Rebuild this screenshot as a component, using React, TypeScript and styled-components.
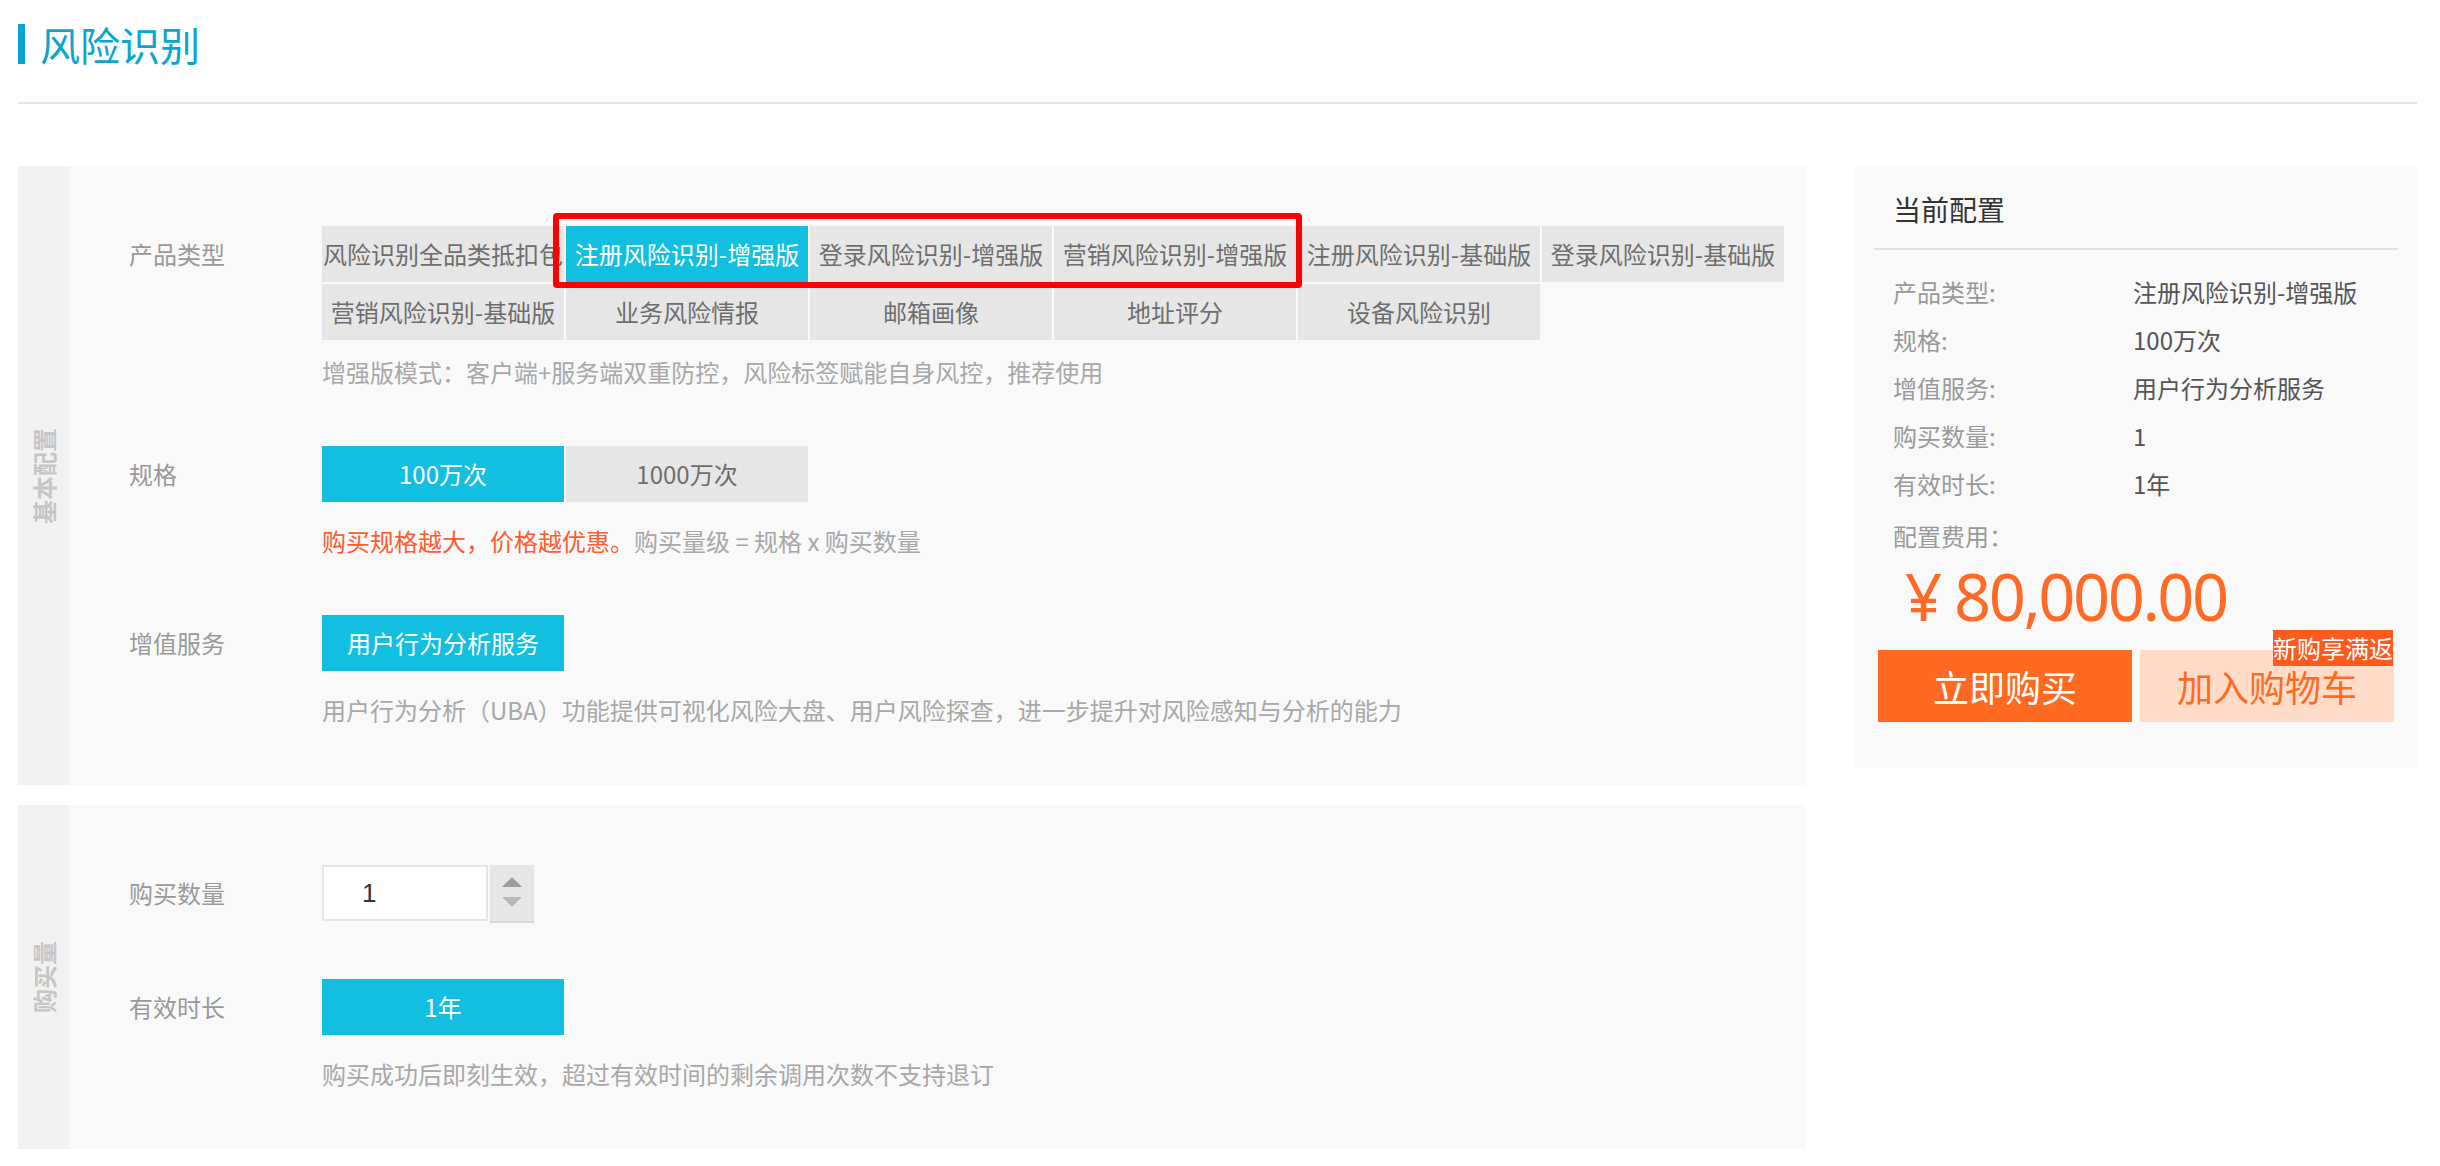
import styled, { createGlobalStyle } from "styled-components";

const cjk = `"Noto Sans CJK SC", "Noto Sans", sans-serif`;

const colors = {
  brand: "#08a6cf",
  cyan: "#13bfe1",
  cell: "#e6e6e6",
  panel: "#f9f9f9",
  strip: "#f2f2f2",
  label: "#999999",
  hint: "#a8a8a8",
  orange: "#ff6a26",
  warn: "#ff5b2e",
};

const GlobalStyle = createGlobalStyle`
  * { box-sizing: border-box; }
  body {
    margin: 0;
    background: #fff;
    font-family: ${cjk};
    color: #333;
  }
`;

const products = [
  "风险识别全品类抵扣包",
  "注册风险识别-增强版",
  "登录风险识别-增强版",
  "营销风险识别-增强版",
  "注册风险识别-基础版",
  "登录风险识别-基础版",
  "营销风险识别-基础版",
  "业务风险情报",
  "邮箱画像",
  "地址评分",
  "设备风险识别",
];

const summary = [
  ["产品类型:", "注册风险识别-增强版"],
  ["规格:", "100万次"],
  ["增值服务:", "用户行为分析服务"],
  ["购买数量:", "1"],
  ["有效时长:", "1年"],
];

export default function App() {
  return (
    <Page>
      <GlobalStyle />
      <Header>
        <TitleBar />
        <TitleText>风险识别</TitleText>
      </Header>

      <Main>
        <LeftCol>
          <Section>
            <SideStrip>
              <SideText>基本配置</SideText>
            </SideStrip>
            <SectionBody>
              <Row>
                <Label>产品类型</Label>
                <Field>
                  <OptionGrid>
                    {products.map((p, i) => (
                      <Option key={p} $active={i === 1}>
                        {p}
                      </Option>
                    ))}
                    <Highlight aria-hidden="true" />
                  </OptionGrid>
                  <Hint $tight>
                    增强版模式：客户端+服务端双重防控，风险标签赋能自身风控，推荐使用
                  </Hint>
                </Field>
              </Row>

              <Row>
                <Label>规格</Label>
                <Field>
                  <ChoiceRow>
                    <Option $active>100万次</Option>
                    <Option>1000万次</Option>
                  </ChoiceRow>
                  <Hint>
                    <Warn>购买规格越大，价格越优惠。</Warn>购买量级 = 规格 x 购买数量
                  </Hint>
                </Field>
              </Row>

              <Row>
                <Label>增值服务</Label>
                <Field>
                  <ChoiceRow>
                    <Option $active>用户行为分析服务</Option>
                  </ChoiceRow>
                  <Hint>
                    用户行为分析（UBA）功能提供可视化风险大盘、用户风险探查，进一步提升对风险感知与分析的能力
                  </Hint>
                </Field>
              </Row>
            </SectionBody>
          </Section>

          <Section>
            <SideStrip>
              <SideText>购买量</SideText>
            </SideStrip>
            <SectionBody>
              <Row>
                <Label>购买数量</Label>
                <Stepper>
                  <QtyInput defaultValue="1" />
                  <Spinner>
                    <svg width="20" height="10" viewBox="0 0 20 10">
                      <polygon points="10,0 20,10 0,10" fill="#9e9e9e" />
                    </svg>
                    <svg width="20" height="10" viewBox="0 0 20 10">
                      <polygon points="0,0 20,0 10,10" fill="#b8b8b8" />
                    </svg>
                  </Spinner>
                </Stepper>
              </Row>

              <Row>
                <Label>有效时长</Label>
                <Field>
                  <ChoiceRow>
                    <Option $active>1年</Option>
                  </ChoiceRow>
                  <Hint>购买成功后即刻生效，超过有效时间的剩余调用次数不支持退订</Hint>
                </Field>
              </Row>
            </SectionBody>
          </Section>
        </LeftCol>

        <Summary>
          <SummaryTitle>当前配置</SummaryTitle>
          <SummaryDivider />
          <InfoGrid>
            {summary.map(([k, v]) => (
              <InfoPair key={k}>
                <InfoKey>{k}</InfoKey>
                <InfoValue>{v}</InfoValue>
              </InfoPair>
            ))}
          </InfoGrid>
          <FeeLabel>配置费用：</FeeLabel>
          <Price>¥ 80,000.00</Price>
          <Actions>
            <ActionButton $variant="solid">立即购买</ActionButton>
            <ActionButton $variant="soft">
              加入购物车
              <Badge>新购享满返</Badge>
            </ActionButton>
          </Actions>
        </Summary>
      </Main>
    </Page>
  );
}

const Page = styled.div`
  padding: 0 23px 40px 18px;
`;

const Header = styled.header`
  display: flex;
  align-items: center;
  padding: 24px 0 38px;
  border-bottom: 2px solid #e6e6e6;
`;

const TitleBar = styled.span`
  width: 7px;
  height: 40px;
  background: ${colors.brand};
  margin-right: 15px;
`;

const TitleText = styled.h1`
  margin: 0;
  font-size: 40px;
  line-height: 40px;
  font-weight: 400;
  color: ${colors.brand};
`;

const Main = styled.main`
  display: flex;
  align-items: flex-start;
  gap: 48px;
  margin-top: 62px;
`;

const LeftCol = styled.div`
  flex: 1;
  display: flex;
  flex-direction: column;
  gap: 20px;
`;

const Section = styled.section`
  display: flex;
  background: ${colors.panel};
`;

const SideStrip = styled.div`
  width: 52px;
  flex-shrink: 0;
  background: ${colors.strip};
  display: flex;
  align-items: center;
  justify-content: center;
`;

const SideText = styled.span`
  writing-mode: vertical-rl;
  text-orientation: sideways;
  transform: rotate(180deg);
  font-size: 24px;
  font-weight: 700;
  color: #c6c6c6;
  line-height: 1;
`;

const SectionBody = styled.div`
  flex: 1;
  display: flex;
  flex-direction: column;
  gap: 56px;
  padding: 60px 0 57px 59px;
`;

const Row = styled.div`
  display: flex;
  align-items: flex-start;
`;

const Label = styled.div`
  width: 193px;
  flex-shrink: 0;
  font-size: 24px;
  line-height: 56px;
  color: ${colors.label};
`;

const Field = styled.div`
  display: flex;
  flex-direction: column;
`;

const OptionGrid = styled.div`
  position: relative;
  display: grid;
  grid-template-columns: repeat(6, 242px);
  gap: 2px;
`;

const ChoiceRow = styled.div`
  display: flex;
  gap: 2px;
`;

const Option = styled.div<{ $active?: boolean }>`
  width: 242px;
  height: 56px;
  line-height: 56px;
  font-size: 24px;
  text-align: center;
  white-space: nowrap;
  overflow: hidden;
  background: ${(p) => (p.$active ? colors.cyan : colors.cell)};
  color: ${(p) => (p.$active ? "#fff" : "#6e6e6e")};
`;

const Highlight = styled.div`
  position: absolute;
  left: 231px;
  top: -13px;
  width: 749px;
  height: 75px;
  border: 6px solid #ff0000;
  border-radius: 4px;
  pointer-events: none;
`;

const Hint = styled.div<{ $tight?: boolean }>`
  margin-top: ${(p) => (p.$tight ? 14 : 21)}px;
  font-size: 24px;
  line-height: 36px;
  color: ${colors.hint};
  white-space: nowrap;
`;

const Warn = styled.span`
  color: ${colors.warn};
`;

const Stepper = styled.div`
  display: flex;
  align-items: flex-start;
  gap: 2px;
`;

const QtyInput = styled.input`
  width: 166px;
  height: 56px;
  border: 2px solid #e6e6e6;
  background: #fff;
  padding: 0 0 0 38px;
  font-family: "Liberation Sans", sans-serif;
  font-size: 26px;
  color: #333;
  outline: none;
`;

const Spinner = styled.div`
  width: 44px;
  height: 58px;
  background: ${colors.cell};
  border-bottom: 2px solid #dadada;
  display: flex;
  flex-direction: column;
  align-items: center;
  justify-content: center;
  gap: 10px;
  padding-bottom: 2px;
`;

const Summary = styled.aside`
  width: 563px;
  flex-shrink: 0;
  background: ${colors.panel};
  padding: 23px 23px 46px 24px;
`;

const SummaryTitle = styled.h2`
  margin: 0;
  padding-left: 15px;
  font-size: 28px;
  line-height: 40px;
  font-weight: 400;
  color: #333;
`;

const SummaryDivider = styled.div`
  height: 2px;
  background: #e0e0e0;
  margin: 19px -4px 18px;
`;

const InfoGrid = styled.dl`
  margin: 0;
  padding-left: 15px;
`;

const InfoPair = styled.div`
  display: grid;
  grid-template-columns: 240px 1fr;
  font-size: 24px;
  line-height: 48px;
`;

const InfoKey = styled.dt`
  color: ${colors.label};
`;

const InfoValue = styled.dd`
  margin: 0;
  color: #555;
`;

const FeeLabel = styled.div`
  margin-top: 4px;
  padding-left: 15px;
  font-size: 24px;
  line-height: 48px;
  color: ${colors.label};
`;

const Price = styled.div`
  padding-left: 27px;
  font-family: "Noto Sans", sans-serif;
  font-size: 65px;
  line-height: 72px;
  letter-spacing: -2.5px;
  color: ${colors.orange};
`;

const Actions = styled.div`
  display: flex;
  gap: 8px;
  margin-top: 18px;
`;

const ActionButton = styled.button<{ $variant: "solid" | "soft" }>`
  position: relative;
  flex: 1;
  height: 72px;
  border: none;
  font-family: ${cjk};
  font-size: 36px;
  background: ${(p) => (p.$variant === "solid" ? "#ff6a22" : "#ffdcc7")};
  color: ${(p) => (p.$variant === "solid" ? "#fff" : "#ff6a22")};
  cursor: pointer;
`;

const Badge = styled.span`
  position: absolute;
  right: 1px;
  top: -20px;
  height: 36px;
  line-height: 36px;
  padding: 0;
  font-size: 24px;
  color: #fff;
  background: #ff5a1e;
`;
